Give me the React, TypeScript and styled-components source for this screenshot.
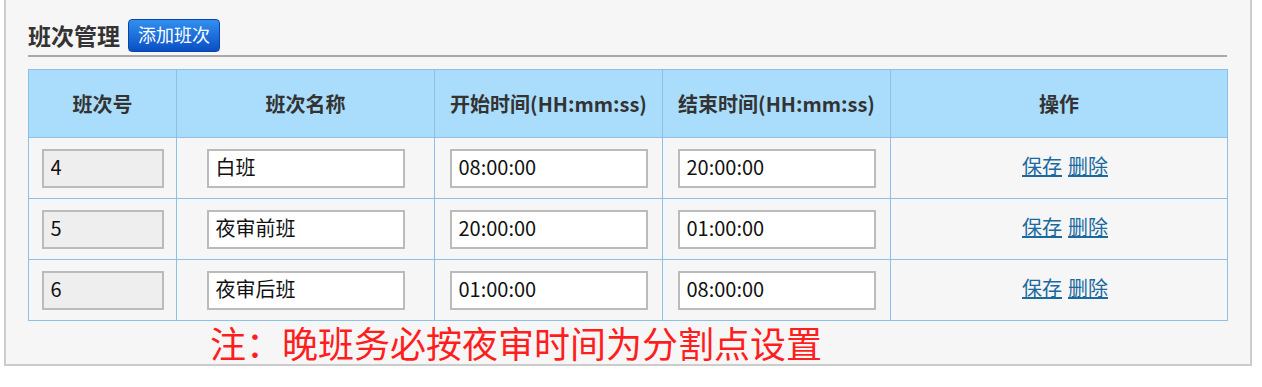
import React from "react";
import styled, { createGlobalStyle } from "styled-components";

const GlobalStyle = createGlobalStyle`
  html, body {
    margin: 0;
    padding: 0;
    background: #ffffff;
  }
  body {
    font-family: "Noto Sans CJK SC", "Noto Sans", sans-serif;
    color: #333;
  }
`;

const Panel = styled.div`
  box-sizing: border-box;
  width: 1248px;
  margin-left: 4px;
  background: #f6f6f6;
  border: 2px solid #cccccc;
  border-top: none;
  padding: 19px 23px 0 22px;
`;

const TitleBar = styled.div`
  display: flex;
  align-items: center;
  gap: 8px;
  height: 33px;
  padding-bottom: 3px;
  border-bottom: 2px solid #aaaaaa;
  margin-bottom: 12px;
`;

const Title = styled.h2`
  margin: 0;
  font-size: 23px;
  font-weight: 700;
  line-height: 33px;
  color: #333;
`;

const AddButton = styled.button`
  box-sizing: border-box;
  height: 33px;
  width: 92px;
  padding: 0 0 2px;
  border: 1px solid #0b43a8;
  border-radius: 4px;
  background: linear-gradient(#3190f0, #0a4fc4);
  color: #fff;
  font-family: inherit;
  font-size: 18px;
  line-height: 29px;
  cursor: pointer;
`;

const Table = styled.table`
  border-collapse: collapse;
  width: 1200px;
  table-layout: fixed;
  border: 1px solid #8cc0e6;

  th,
  td {
    border: 1px solid #8cc0e6;
    padding: 0;
    text-align: center;
    vertical-align: middle;
  }
`;

const HeadCell = styled.th`
  height: 67px;
  background: #aaddfc;
  font-size: 20px;
  font-weight: 700;
  color: #333;
`;

const Row = styled.tr`
  height: 61px;
  background: #f6f6f6;
`;

const Field = styled.input<{ $narrow?: boolean; $readonly?: boolean }>`
  box-sizing: border-box;
  width: ${(p) => (p.$narrow ? "122px" : "198px")};
  height: 39px;
  padding: 0 7px 4px;
  border: 2px solid #bbbbbb;
  background: ${(p) => (p.$readonly ? "#eeeeee" : "#ffffff")};
  font-family: "Noto Sans CJK SC", "Noto Sans", sans-serif;
  font-size: 20px;
  color: #111;
  outline: none;
  vertical-align: middle;
`;

const Actions = styled.div`
  display: flex;
  justify-content: center;
  gap: 6px;
  padding: 0 0 4px 12px;
`;

const Link = styled.a`
  color: #1a6aa0;
  text-decoration: underline;
  font-size: 20px;
  line-height: 26px;
  cursor: pointer;
`;

const Note = styled.p`
  margin: 0 0 0 182px;
  height: 43px;
  font-size: 36px;
  line-height: 43px;
  color: #ff1e1e;
`;

const shifts = [
  { id: "4", name: "白班", start: "08:00:00", end: "20:00:00" },
  { id: "5", name: "夜审前班", start: "20:00:00", end: "01:00:00" },
  { id: "6", name: "夜审后班", start: "01:00:00", end: "08:00:00" },
];

const App: React.FC = () => {
  return (
    <>
      <GlobalStyle />
      <Panel>
        <TitleBar>
          <Title>班次管理</Title>
          <AddButton type="button">添加班次</AddButton>
        </TitleBar>
        <Table>
          <colgroup>
            <col style={{ width: 148 }} />
            <col style={{ width: 258 }} />
            <col style={{ width: 228 }} />
            <col style={{ width: 228 }} />
            <col />
          </colgroup>
          <thead>
            <tr>
              <HeadCell>班次号</HeadCell>
              <HeadCell>班次名称</HeadCell>
              <HeadCell>开始时间(HH:mm:ss)</HeadCell>
              <HeadCell>结束时间(HH:mm:ss)</HeadCell>
              <HeadCell>操作</HeadCell>
            </tr>
          </thead>
          <tbody>
            {shifts.map((s) => (
              <Row key={s.id}>
                <td>
                  <Field $narrow $readonly readOnly defaultValue={s.id} />
                </td>
                <td>
                  <Field defaultValue={s.name} />
                </td>
                <td>
                  <Field defaultValue={s.start} />
                </td>
                <td>
                  <Field defaultValue={s.end} />
                </td>
                <td>
                  <Actions>
                    <Link>保存</Link>
                    <Link>删除</Link>
                  </Actions>
                </td>
              </Row>
            ))}
          </tbody>
        </Table>
        <Note>注：晚班务必按夜审时间为分割点设置</Note>
      </Panel>
    </>
  );
};

export default App;
